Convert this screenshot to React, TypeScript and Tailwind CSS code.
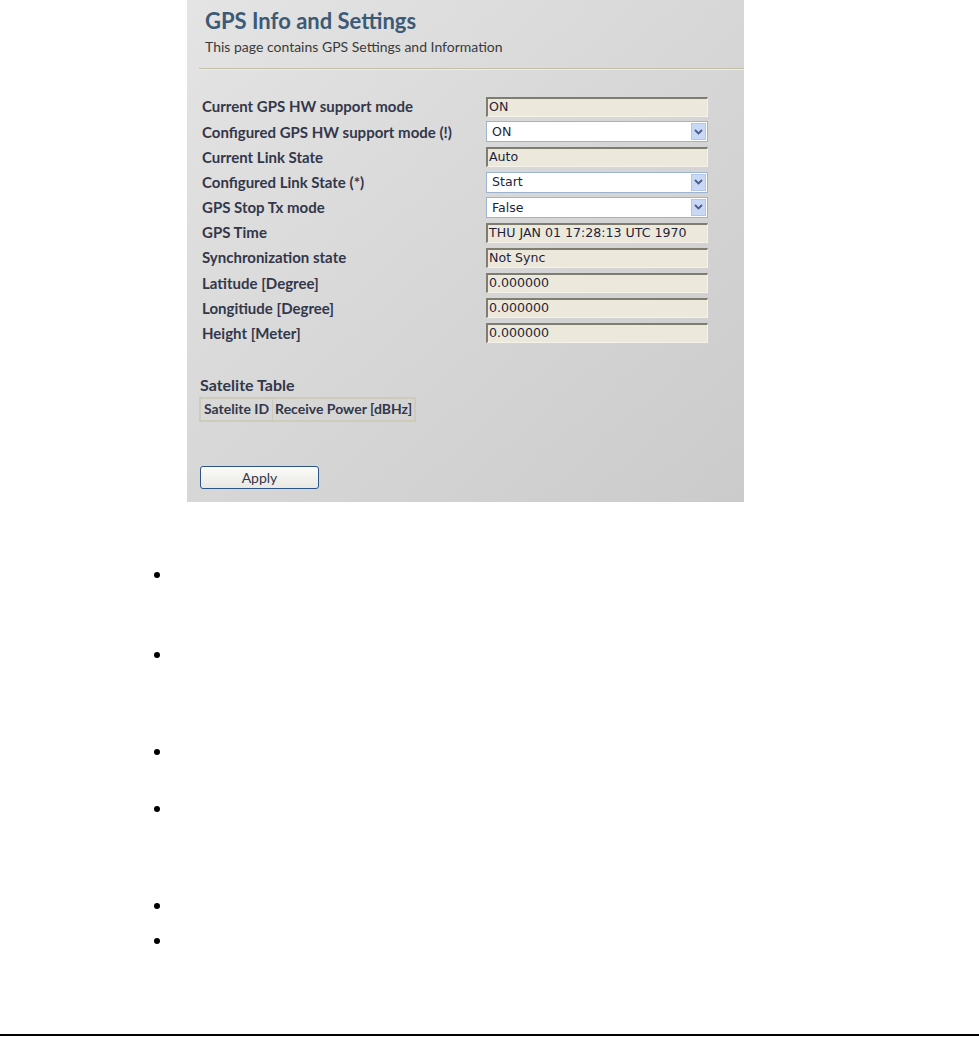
import React from 'react';

type Field = {
  label: string;
  value: string;
  kind: 'text' | 'select';
};

const fields: Field[] = [
  { label: 'Current GPS HW support mode', value: 'ON', kind: 'text' },
  { label: 'Configured GPS HW support mode (!)', value: 'ON', kind: 'select' },
  { label: 'Current Link State', value: 'Auto', kind: 'text' },
  { label: 'Configured Link State (*)', value: 'Start', kind: 'select' },
  { label: 'GPS Stop Tx mode', value: 'False', kind: 'select' },
  { label: 'GPS Time', value: 'THU JAN 01 17:28:13 UTC 1970', kind: 'text' },
  { label: 'Synchronization state', value: 'Not Sync', kind: 'text' },
  { label: 'Latitude [Degree]', value: '0.000000', kind: 'text' },
  { label: 'Longitiude [Degree]', value: '0.000000', kind: 'text' },
  { label: 'Height [Meter]', value: '0.000000', kind: 'text' },
];

// gaps above each bullet, in px
const bullets = ['mt-[70px]', 'mt-[74px]', 'mt-[91px]', 'mt-[51px]', 'mt-[91px]', 'mt-[29px]'];

const ReadOnlyBox: React.FC<{ value: string }> = ({ value }) => (
  <div className="h-[20px] w-[222px] bg-[#ece9dc] border-t-2 border-l-2 border-t-[#7f7c70] border-l-[#7f7c70] border-r border-b border-r-[#f4f2ea] border-b-[#f4f2ea] pl-[1px] flex items-center text-[12.6px] text-[#1f1f3a] font-['DejaVu_Sans',sans-serif] leading-none">
    {value}
  </div>
);

const SelectBox: React.FC<{ value: string }> = ({ value }) => (
  <div className="h-[21px] w-[222px] bg-white border border-[#9db3cf] flex items-center justify-between text-[12.6px] text-[#1f1f3a] font-['DejaVu_Sans',sans-serif] leading-none">
    <span className="pl-[5px] pt-[1px]">{value}</span>
    <span className="mr-[1px] w-[15px] h-[17px] bg-[#c9d8f5] border border-[#b3c5eb] flex items-center justify-center">
      <svg width="9" height="6" viewBox="0 0 9 6">
        <path d="M1 1 L4.5 4.5 L8 1" fill="none" stroke="#4a5d86" strokeWidth="1.8" />
      </svg>
    </span>
  </div>
);

const GpsPanel: React.FC = () => (
  <div className="ml-[187px] w-[557px] h-[502px] bg-gradient-to-br from-[#e4e4e4] via-[#d7d7d7] to-[#cbcbcb] flex flex-col font-['Lato','Open_Sans',sans-serif]">
    <div className="pl-[18px] pt-[6px] h-[68px]">
      <h1 className="text-[22px] font-bold text-[#3c5a76] leading-[30px]">GPS Info and Settings</h1>
      <p className="mt-[2px] text-[14px] text-[#3a3a3a] leading-[18px]">This page contains GPS Settings and Information</p>
    </div>
    <div className="ml-[12px] h-[2px] border-t border-t-[#c4bfa8] border-b border-b-[#ecebe4]" />
    <div className="mt-[24px] flex flex-col">
      {fields.map((f) => (
        <div key={f.label} className="h-[25.2px] flex items-center">
          <span className="w-[299px] pl-[15px] text-[15px] font-bold text-[#33374a]">{f.label}</span>
          {f.kind === 'text' ? <ReadOnlyBox value={f.value} /> : <SelectBox value={f.value} />}
        </div>
      ))}
    </div>
    <div className="mt-[29px] pl-[12px]">
      <h2 className="mb-[2px] pl-[1px] text-[16px] font-bold text-[#33374a] leading-[20px]">Satelite Table</h2>
      <table className="border-collapse border-2 border-[#cfcbb9] text-[14px] font-bold text-[#33374a]">
        <tbody>
          <tr className="h-[23px]">
            <td className="border border-[#cfcbb9] px-[3px] leading-[18px]">Satelite ID</td>
            <td className="border border-[#cfcbb9] px-[2px] leading-[18px]">Receive Power [dBHz]</td>
          </tr>
        </tbody>
      </table>
    </div>
    <div className="mt-[43px] pl-[13px]">
      <button className="w-[119px] h-[23px] rounded-[3px] border border-[#2c5487] bg-gradient-to-b from-[#fbfbfa] to-[#e9e8e3] text-[14px] text-[#33374a]">
        Apply
      </button>
    </div>
  </div>
);

export default function App() {
  return (
    <div className="min-h-[1037px] bg-white flex flex-col">
      <GpsPanel />
      <div className="flex flex-col">
        {bullets.map((m, i) => (
          <div key={i} className={`${m} ml-[154px] w-[6px] h-[6px] rounded-full bg-black`} />
        ))}
      </div>
      <div className="mt-auto mb-[1px] h-[2px] bg-black" />
    </div>
  );
}
